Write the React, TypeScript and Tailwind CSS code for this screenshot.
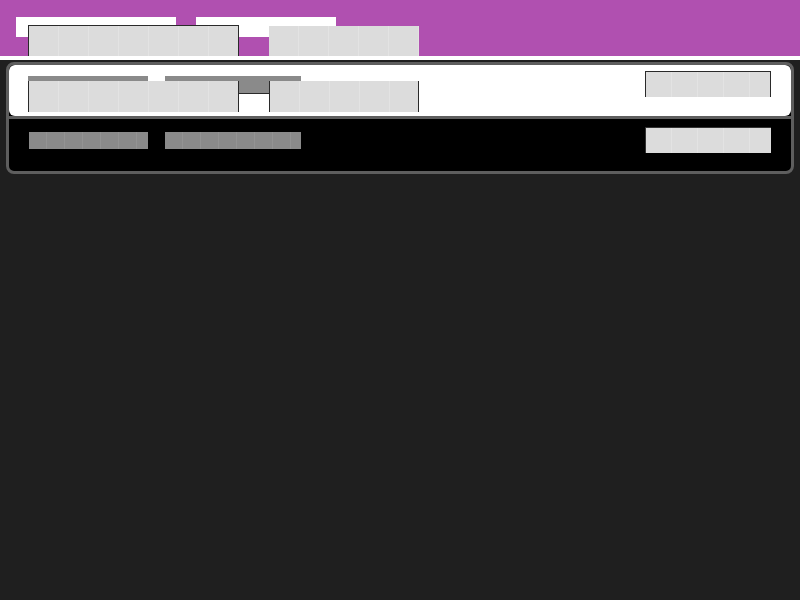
import React from "react";

const light30 =
  "bg-[repeating-linear-gradient(90deg,#dcdcdc_0px,#dcdcdc_29px,#e3e3e3_29px,#e3e3e3_30px)]";
const light25 =
  "bg-[repeating-linear-gradient(90deg,#dcdcdc_0px,#dcdcdc_25px,#e3e3e3_25px,#e3e3e3_26px)]";
const dark17 =
  "bg-[repeating-linear-gradient(90deg,#8a8a8a_0px,#8a8a8a_17px,#939393_17px,#939393_18px)]";

export default function App() {
  return (
    <div className="min-h-screen w-full bg-[#1f1f1f] font-['Liberation_Sans',sans-serif]">
      {/* header */}
      <div className="relative h-[56px] bg-[#b050b0]">
        <div className="absolute left-[16px] top-[17px] h-[20px] w-[160px] bg-white" />
        <div className="absolute left-[196px] top-[17px] h-[20px] w-[140px] bg-white" />
        <div className="flex h-full items-end pl-[28px]">
          <div className={`relative h-[31px] w-[211px] border-x border-t border-[#2a2a2a] ${light30}`} />
          <div className={`relative ml-[30px] h-[30px] w-[150px] ${light30}`} />
        </div>
      </div>
      <div className="h-[4px] bg-white" />

      <div className="px-[6px] pt-[2px]">
        <div className="overflow-hidden rounded-[8px] border-[3px] border-[#5e5e5e] bg-black">
          {/* row 1 */}
          <div className="relative h-[51px] rounded-[6px] bg-white">
            <div className="absolute left-[19px] top-[11px] h-[17px] w-[120px] bg-[#8a8a8a]" />
            <div className="absolute left-[156px] top-[11px] h-[17px] w-[136px] bg-[#8a8a8a]" />
            <div className="flex h-full items-start pl-[19px] pr-[20px] pt-[16px]">
              <div className={`relative h-[31px] w-[211px] border-x border-[#2a2a2a] ${light30}`} />
              <div className="relative mt-[12px] h-[19px] w-[30px] border-t border-[#2a2a2a] bg-white" />
              <div className={`relative h-[31px] w-[150px] border-x border-[#2a2a2a] ${light30}`} />
              <div className={`relative ml-auto -mt-[10px] h-[26px] w-[126px] border-x border-t border-[#2a2a2a] ${light25}`} />
            </div>
          </div>
          <div className="h-[3px] bg-[#5e5e5e]" />
          {/* row 2 */}
          <div className="flex h-[52px] items-start pl-[20px] pr-[20px] pt-[8px]">
            <div className={`mt-[5px] h-[17px] w-[119px] ${dark17}`} />
            <div className={`ml-[17px] mt-[5px] h-[17px] w-[136px] ${dark17}`} />
            <div className={`ml-auto h-[26px] w-[126px] border-l border-t border-[#333333] ${light25}`} />
          </div>
        </div>
      </div>
    </div>
  );
}
